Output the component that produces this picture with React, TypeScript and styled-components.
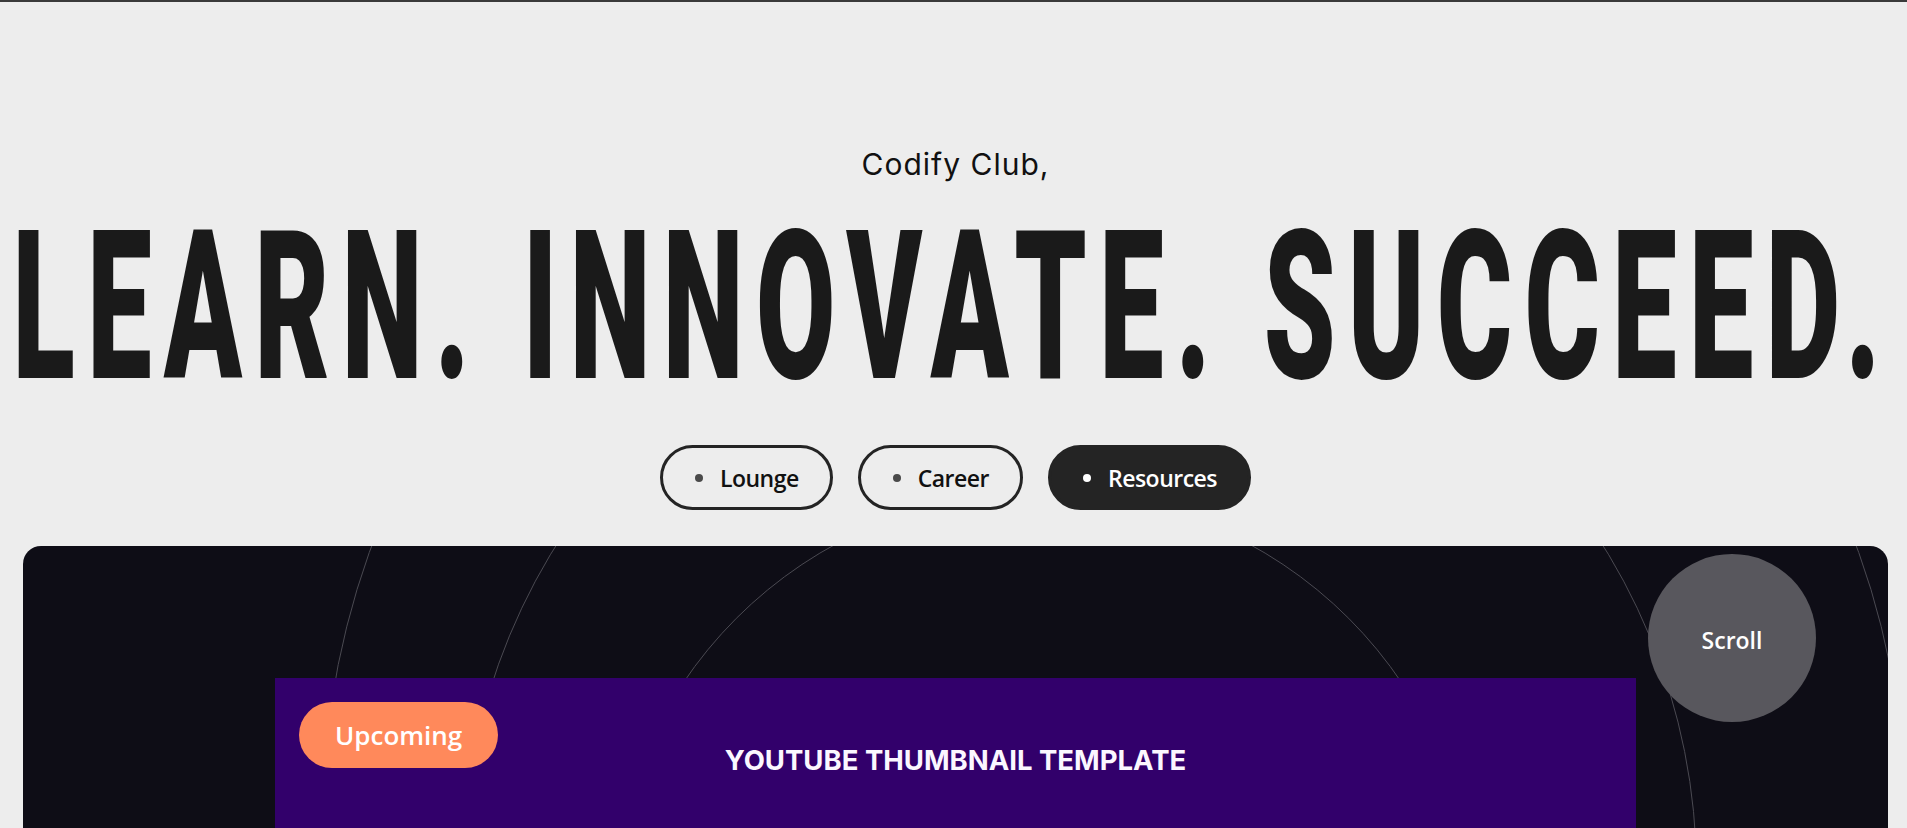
import React, { useLayoutEffect, useRef, useState } from 'react'
import styled, { createGlobalStyle } from 'styled-components'

const GlobalStyle = createGlobalStyle`
  html, body {
    margin: 0;
    padding: 0;
    overflow: hidden;
    background: #ededed;
  }
  * {
    box-sizing: border-box;
  }
`

// width the headline should span in the reference, from first to last glyph
const HEADLINE_WIDTH = 1880

const Page = styled.div`
  height: 828px;
  border-top: 2px solid #3a3a3a;
  padding: 144px 19px 0 23px;
  display: flex;
  flex-direction: column;
  align-items: center;
  overflow: hidden;
`

const Kicker = styled.p`
  margin: 0;
  font-family: Inter, "Noto Sans", sans-serif;
  font-size: 30px;
  line-height: 36px;
  letter-spacing: 1px;
  color: #111;
`

const Headline = styled.h1`
  margin: 22px 0 0;
  width: 100%;
  display: flex;
  justify-content: center;
  font-family: Roboto, "Liberation Sans", sans-serif;
  font-weight: 900;
  font-size: 207px;
  line-height: 1;
  color: #1a1a1a;
  white-space: nowrap;
`

const HeadlineText = styled.span`
  display: inline-block;
  letter-spacing: 22px;
  transform-origin: center;
`

const Tabs = styled.nav`
  margin-top: 34px;
  display: flex;
  gap: 25px;
`

const Tab = styled.button<{ active?: boolean }>`
  height: 65px;
  display: flex;
  align-items: center;
  gap: 17px;
  padding: 0 31px 0 32px;
  border: 3px solid #242424;
  border-radius: 33px;
  background: ${(p) => (p.active ? '#242424' : 'transparent')};
  color: ${(p) => (p.active ? '#fff' : '#111')};
  font-family: "Open Sans", "Noto Sans", sans-serif;
  font-weight: 600;
  font-size: 23px;
  letter-spacing: -0.5px;
  cursor: pointer;
`

const Dot = styled.span<{ active?: boolean }>`
  width: 8px;
  height: 8px;
  border-radius: 50%;
  background: ${(p) => (p.active ? '#fff' : '#4a4a4a')};
`

const Showcase = styled.section`
  position: relative;
  margin-top: 36px;
  width: 100%;
  flex: 1;
  min-height: 0;
  padding: 132px 252px 0;
  background: #0e0d16;
  border-radius: 18px 18px 0 0;
  overflow: hidden;
`

const Rings = styled.svg`
  position: absolute;
  inset: 0;
  width: 100%;
  height: 100%;
  pointer-events: none;
`

const Thumbnail = styled.div`
  position: relative;
  z-index: 1;
  height: 700px;
  padding-top: 66px;
  background: #32006b;
  text-align: center;
`

const ThumbTitle = styled.h2`
  margin: 0;
  font-family: Inter, "Liberation Sans", sans-serif;
  font-weight: 700;
  font-size: 27.5px;
  line-height: 1.2;
  color: #fbf7ff;
`

const Badge = styled.span`
  position: absolute;
  top: 24px;
  left: 24px;
  height: 66px;
  display: flex;
  align-items: center;
  padding: 0 36px;
  border-radius: 33px;
  background: #ff895b;
  color: #fff;
  font-family: "Open Sans", "Noto Sans", sans-serif;
  font-weight: 600;
  font-size: 26px;
`

const ScrollButton = styled.button`
  position: absolute;
  z-index: 2;
  top: 8px;
  right: 72px;
  width: 168px;
  height: 168px;
  padding-top: 4px;
  border: none;
  border-radius: 50%;
  background: #58575d;
  color: #fff;
  font-family: "Open Sans", "Noto Sans", sans-serif;
  font-weight: 600;
  font-size: 23px;
  cursor: pointer;
`

const tabs = ['Lounge', 'Career', 'Resources']

// decorative rings, coordinates relative to the showcase card
const rings = [
  { cx: 1019.5, cy: 378.5, r: 433 },
  { cx: 1056.5, cy: 326, r: 617 },
  { cx: 1091, cy: 273, r: 791 },
]

export default function App() {
  const textRef = useRef<HTMLSpanElement>(null)
  const [scale, setScale] = useState(1)

  useLayoutEffect(() => {
    const fit = () => {
      const el = textRef.current
      if (!el) return
      setScale(HEADLINE_WIDTH / el.offsetWidth)
    }
    fit()
    if (document.fonts) document.fonts.ready.then(fit)
  }, [])

  return (
    <>
      <GlobalStyle />
      <Page>
        <Kicker>Codify Club,</Kicker>
        <Headline>
          <HeadlineText ref={textRef} style={{ transform: `translateX(-3px) scaleX(${scale})` }}>
            LEARN. INNOVATE. SUCCEED.
          </HeadlineText>
        </Headline>
        <Tabs>
          {tabs.map((t) => (
            <Tab key={t} active={t === 'Resources'}>
              <Dot active={t === 'Resources'} />
              {t}
            </Tab>
          ))}
        </Tabs>
        <Showcase>
          <Rings>
            {rings.map((c, i) => (
              <circle key={i} cx={c.cx} cy={c.cy} r={c.r} fill="none" stroke="#4b4a52" strokeWidth="1" />
            ))}
          </Rings>
          <ScrollButton>Scroll</ScrollButton>
          <Thumbnail>
            <Badge>Upcoming</Badge>
            <ThumbTitle>YOUTUBE THUMBNAIL TEMPLATE</ThumbTitle>
          </Thumbnail>
        </Showcase>
      </Page>
    </>
  )
}
